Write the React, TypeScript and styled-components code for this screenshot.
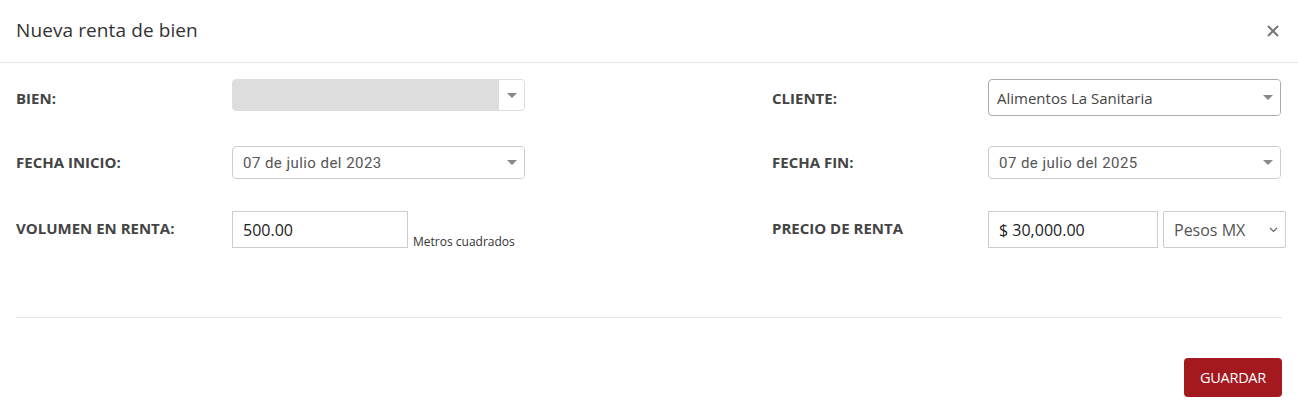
import React from "react";
import styled, { createGlobalStyle } from "styled-components";

const Global = createGlobalStyle`
  html, body { margin: 0; padding: 0; background: #fff; }
  body { font-family: "Open Sans", "Noto Sans", sans-serif; color: #333; }
  * { box-sizing: border-box; }
`;

const Modal = styled.div`
  width: 1298px;
  height: 413px;
  background: #fff;
  display: flex;
  flex-direction: column;
`;

const Header = styled.div`
  height: 63px;
  border-bottom: 1px solid #e5e5e5;
  display: flex;
  align-items: center;
  justify-content: space-between;
  padding: 0 18px 0 16px;
`;

const Title = styled.h4`
  margin: 0 0 2px 0;
  font-size: 19px;
  font-weight: 400;
  color: #333;
  letter-spacing: 0.1px;
`;

const Close = styled.button`
  border: none;
  background: transparent;
  padding: 0;
  width: 14px;
  height: 14px;
  display: flex;
  align-items: center;
  justify-content: center;
  cursor: pointer;
`;

const Body = styled.div`
  padding: 16px 16px 0 16px;
`;

const Grid = styled.div`
  display: grid;
  grid-template-columns: 216px 540px 216px 1fr;
  grid-template-rows: 37px 35px 37px;
  row-gap: 30px;
`;

const Label = styled.div<{ $lift?: number }>`
  font-size: 15px;
  font-weight: 700;
  color: #444;
  display: flex;
  align-items: center;
  padding-bottom: ${(p) => p.$lift ?? 0}px;
`;

const Cell = styled.div`
  display: flex;
  align-items: flex-start;
  gap: 5px;
`;

const Select2 = styled.div<{ $dark?: boolean; $disabled?: boolean; $h?: number }>`
  width: 293px;
  height: ${(p) => p.$h ?? 33}px;
  border: 1px solid ${(p) => (p.$dark ? "#aaa" : p.$disabled ? "#ddd" : "#ccc")};
  border-radius: 4px;
  background: ${(p) => (p.$disabled ? "#ddd" : "#fff")};
  display: flex;
  align-items: center;
  overflow: hidden;
`;

const SelectText = styled.span<{ $sans?: boolean }>`
  flex: 1;
  padding-left: ${(p) => (p.$sans ? 8 : 10)}px;
  font-family: ${(p) => (p.$sans ? `"Open Sans", sans-serif` : `Roboto, "Noto Sans", sans-serif`)};
  font-size: 15px;
  color: ${(p) => (p.$sans ? "#444" : "#555")};
  letter-spacing: ${(p) => (p.$sans ? "0" : "0.45px")};
`;

const Arrow = styled.span`
  width: 25px;
  align-self: stretch;
  display: flex;
  align-items: center;
  justify-content: center;
  background: #fff;
  &::after {
    content: "";
    border-left: 5px solid transparent;
    border-right: 5px solid transparent;
    border-top: 5px solid #888;
  }
`;

const Input = styled.div<{ $w: number }>`
  width: ${(p) => p.$w}px;
  height: 37px;
  border: 1px solid #ccc;
  display: flex;
  align-items: center;
  padding-left: 10px;
  font-size: 16px;
  color: #222;
`;

const NativeSelect = styled.div`
  width: 123px;
  height: 37px;
  border: 1px solid #ccc;
  border-radius: 2px;
  display: flex;
  align-items: center;
  justify-content: space-between;
  padding: 0 7px 0 10px;
  font-size: 16px;
  color: #555;
`;

const Hint = styled.span`
  align-self: flex-end;
  font-size: 12px;
  color: #333;
  line-height: 14px;
  margin-bottom: -1px;
`;

const Divider = styled.hr`
  margin: 69px 16px 0 16px;
  border: none;
  border-top: 1px solid #e5e5e5;
`;

const Footer = styled.div`
  display: flex;
  justify-content: flex-end;
  padding: 40px 16px 0 16px;
`;

const Button = styled.button`
  width: 98px;
  height: 39px;
  background: #a3191f;
  color: #fff;
  border: none;
  border-radius: 4px;
  font-family: "Open Sans", sans-serif;
  font-size: 14.5px;
  letter-spacing: -0.3px;
  cursor: pointer;
`;

export default function App() {
  return (
    <>
      <Global />
      <Modal>
        <Header>
          <Title>Nueva renta de bien</Title>
          <Close aria-label="Cerrar">
            <svg width="12" height="12" viewBox="0 0 12 12">
              <path d="M1 1L11 11M11 1L1 11" stroke="#777" strokeWidth="2" />
            </svg>
          </Close>
        </Header>
        <Body>
          <Grid>
            <Label>BIEN:</Label>
            <Cell>
              <Select2 $disabled $h={32}>
                <SelectText />
                <Arrow />
              </Select2>
            </Cell>
            <Label>CLIENTE:</Label>
            <Cell>
              <Select2 $dark $h={37}>
                <SelectText $sans>Alimentos La Sanitaria</SelectText>
                <Arrow />
              </Select2>
            </Cell>

            <Label $lift={3}>FECHA INICIO:</Label>
            <Cell>
              <Select2>
                <SelectText>07 de julio del 2023</SelectText>
                <Arrow />
              </Select2>
            </Cell>
            <Label $lift={3}>FECHA FIN:</Label>
            <Cell>
              <Select2>
                <SelectText>07 de julio del 2025</SelectText>
                <Arrow />
              </Select2>
            </Cell>

            <Label $lift={3}>VOLUMEN EN RENTA:</Label>
            <Cell>
              <Input $w={176}>500.00</Input>
              <Hint>Metros cuadrados</Hint>
            </Cell>
            <Label $lift={3}>PRECIO DE RENTA</Label>
            <Cell>
              <Input $w={170}>$ 30,000.00</Input>
              <NativeSelect>
                <span>Pesos MX</span>
                <svg width="9" height="6" viewBox="0 0 9 6">
                  <path d="M1 1L4.5 4.5L8 1" stroke="#666" strokeWidth="1.2" fill="none" />
                </svg>
              </NativeSelect>
            </Cell>
          </Grid>
        </Body>
        <Divider />
        <Footer>
          <Button>GUARDAR</Button>
        </Footer>
      </Modal>
    </>
  );
}
